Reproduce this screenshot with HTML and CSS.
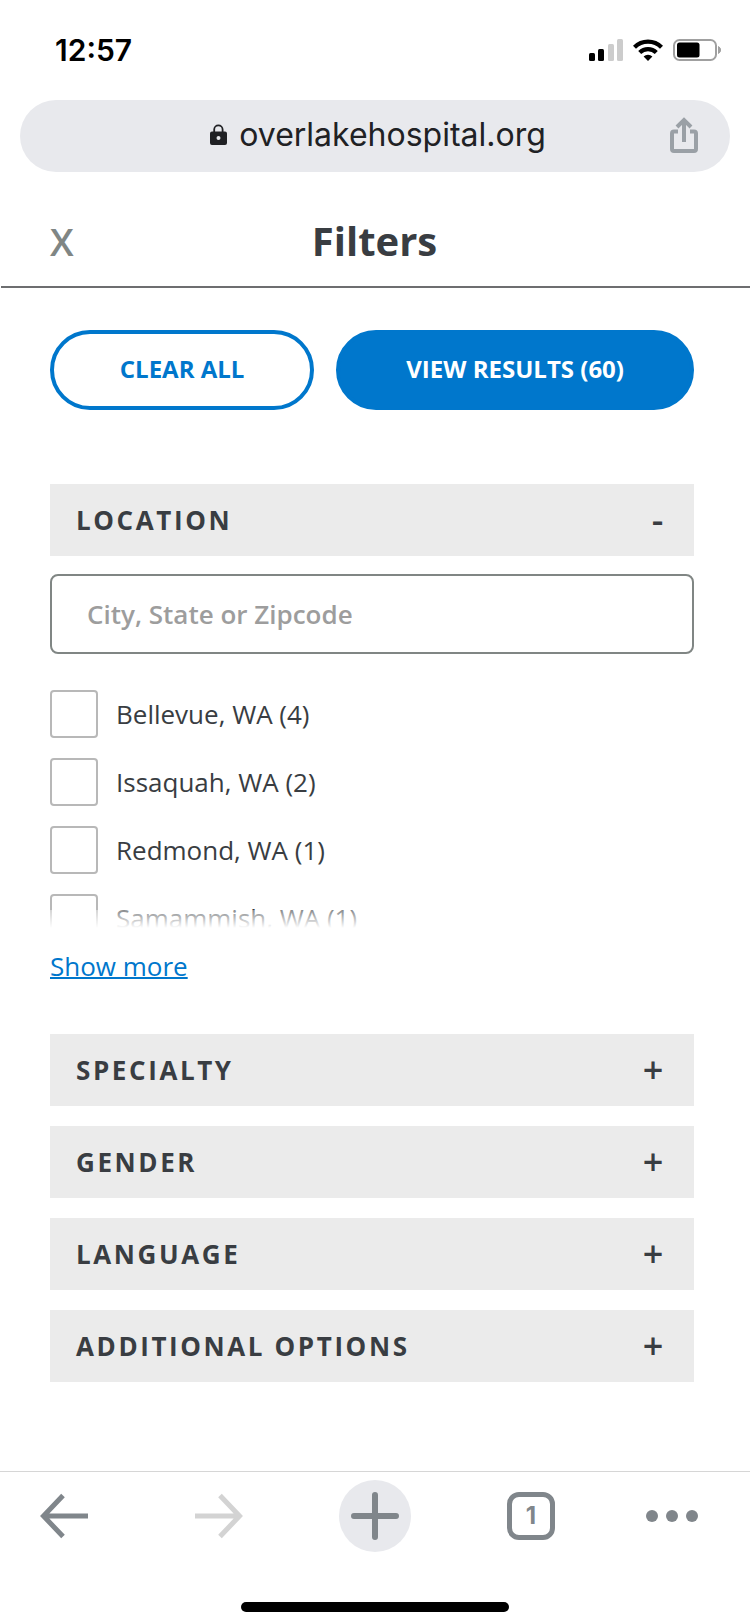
FILE: index.html
```html
<!DOCTYPE html>
<html lang="en">
<head>
<meta charset="utf-8">
<meta name="viewport" content="width=device-width, initial-scale=1">
<title>Filters</title>
<link rel="stylesheet" href="styles.css">
</head>
<body>
<div class="status-bar">
  <span class="status-time">12:57</span>
  <div class="status-icons">
    <svg width="34" height="22" viewBox="0 0 34 22" aria-hidden="true">
      <rect x="0" y="14" width="6" height="8" rx="1.5"/>
      <rect x="9" y="10" width="6" height="12" rx="1.5"/>
      <rect x="19" y="5" width="6" height="17" rx="1.5" fill="#cccccc"/>
      <rect x="28" y="0" width="6" height="22" rx="1.5" fill="#cccccc"/>
    </svg>
    <svg width="30" height="22" viewBox="0 0 30 22" aria-hidden="true">
      <g fill="none" stroke="#000" stroke-width="4.2">
        <path d="M1.500 8.200A19 19 0 0 1 28.500 8.200"/>
        <path d="M6.700 13.500A11.700 11.700 0 0 1 23.300 13.500"/>
      </g>
      <path d="M15 22l-4.400-4.500a6.200 6.200 0 0 1 8.800 0z"/>
    </svg>
    <svg width="49" height="22" viewBox="0 0 49 22" aria-hidden="true">
      <rect x="1" y="1" width="42" height="20" rx="5.500" fill="none" stroke="#a0a0a0" stroke-width="2"/>
      <rect x="4" y="3.500" width="22.500" height="15" rx="2.500"/>
      <path d="M45.500 7.500a4 4 0 0 1 0 7z" fill="#a0a0a0" stroke="#a0a0a0"/>
    </svg>
  </div>
</div>

<div class="address-bar">
  <div class="address">
    <svg width="17" height="22" viewBox="0 0 17 22" aria-hidden="true">
      <path d="M4.200 8V5.500a4.200 4.200 0 0 1 8.400 0V8" fill="none" stroke="#202124" stroke-width="1.800"/>
      <path fill="#202124" fill-rule="evenodd" d="M2 7.500h13a2 2 0 0 1 2 2V19a2 2 0 0 1-2 2H2a2 2 0 0 1-2-2V9.500a2 2 0 0 1 2-2zM8.500 12a2 2 0 1 0 0 4 2 2 0 0 0 0-4z"/>
    </svg>
    <span>overlakehospital.org</span>
  </div>
  <button class="share" type="button" aria-label="Share">
    <svg width="28" height="36" viewBox="0 0 28 36" fill="none" stroke="#9aa0a6" stroke-width="4" aria-hidden="true">
      <path d="M8 14.500H4a2 2 0 0 0-2 2V32a2 2 0 0 0 2 2h20a2 2 0 0 0 2-2V16.500a2 2 0 0 0-2-2h-4" stroke-linejoin="round"/>
      <path d="M14 25V3M7 10l7-7 7 7"/>
    </svg>
  </button>
</div>

<header class="page-header">
  <button class="close" type="button" aria-label="Close filters">X</button>
  <h1 class="title">Filters</h1>
</header>

<main class="content">
  <div class="actions">
    <button class="pill pill-outline" type="button">CLEAR ALL</button>
    <button class="pill pill-solid" type="button">VIEW RESULTS (60)</button>
  </div>

  <section class="location">
    <h2 class="facet"><button class="facet-toggle" type="button" aria-expanded="true"><span>LOCATION</span><span class="facet-sign">-</span></button></h2>
    <input class="place-input" type="text" placeholder="City, State or Zipcode" aria-label="City, State or Zipcode">
    <div class="options">
      <label class="option"><input class="box" type="checkbox"><span>Bellevue, WA (4)</span></label>
      <label class="option"><input class="box" type="checkbox"><span>Issaquah, WA (2)</span></label>
      <label class="option"><input class="box" type="checkbox"><span>Redmond, WA (1)</span></label>
      <label class="option"><input class="box" type="checkbox"><span>Samammish, WA (1)</span></label>
    </div>
    <a class="show-more" href="#">Show more</a>
  </section>

  <div class="facets">
    <h2 class="facet"><button class="facet-toggle" type="button" aria-expanded="false"><span>SPECIALTY</span><span class="facet-sign">+</span></button></h2>
    <h2 class="facet"><button class="facet-toggle" type="button" aria-expanded="false"><span>GENDER</span><span class="facet-sign">+</span></button></h2>
    <h2 class="facet"><button class="facet-toggle" type="button" aria-expanded="false"><span>LANGUAGE</span><span class="facet-sign">+</span></button></h2>
    <h2 class="facet"><button class="facet-toggle" type="button" aria-expanded="false"><span>ADDITIONAL OPTIONS</span><span class="facet-sign">+</span></button></h2>
  </div>
</main>

<footer class="browser-bar">
  <nav class="tools" aria-label="Browser">
    <button class="tool" type="button" aria-label="Back">
      <svg width="48" height="48" viewBox="0 0 48 48" fill="none" stroke="#80868b" stroke-width="5" aria-hidden="true"><path d="M48 24H5M23 3.500L3.500 24 23 44.500"/></svg>
    </button>
    <button class="tool" type="button" aria-label="Forward">
      <svg width="48" height="48" viewBox="0 0 48 48" fill="none" stroke="#d3d3d3" stroke-width="5" aria-hidden="true"><path d="M0 24h43M25 3.500L44.500 24 25 44.500"/></svg>
    </button>
    <button class="tool tool-new" type="button" aria-label="New tab">
      <svg width="48" height="48" viewBox="0 0 48 48" fill="none" stroke="#80868b" stroke-width="6" stroke-linecap="round" aria-hidden="true"><path d="M24 3v42M3 24h42"/></svg>
    </button>
    <button class="tool tool-tabs" type="button" aria-label="Tabs, 1 open"><span class="tab-count">1</span></button>
    <button class="tool tool-menu" type="button" aria-label="Menu">
      <svg width="52" height="12" viewBox="0 0 52 12" fill="#80868b" aria-hidden="true"><circle cx="6" cy="6" r="6"/><circle cx="26" cy="6" r="6"/><circle cx="46" cy="6" r="6"/></svg>
    </button>
  </nav>
  <div class="home-indicator"></div>
</footer>
</body>
</html>
```
FILE: styles.css
```css
* {
  box-sizing: border-box;
}

body {
  margin: 0;
  min-height: 100vh;
  display: flex;
  flex-direction: column;
  background: #fff;
  color: #393d42;
  font-family: "Open Sans", "Noto Sans", sans-serif;
}

button {
  margin: 0;
  padding: 0;
  border: 0;
  background: none;
  color: inherit;
  font: inherit;
  cursor: pointer;
}

svg {
  display: block;
}

.status-bar {
  display: flex;
  justify-content: space-between;
  align-items: center;
  height: 100px;
  padding: 0 28px 0 55px;
  color: #000;
}

.status-time {
  font: 600 30px/36px Inter, sans-serif;
}

.status-icons {
  display: flex;
  gap: 10px;
}

.address-bar {
  display: grid;
  grid-template-columns: 1fr auto 1fr;
  align-items: center;
  height: 72px;
  margin: 0 20px;
  padding: 0 32px 2px 38px;
  border-radius: 36px;
  background: #e8e9ed;
}

.address {
  grid-column: 2;
  display: flex;
  align-items: center;
  gap: 12px;
  color: #202124;
  font: 400 32px/40px Inter, sans-serif;
}

.share {
  justify-self: end;
}

.page-header {
  display: grid;
  grid-template-columns: 1fr auto 1fr;
  align-items: center;
  height: 116px;
  margin-left: 1px;
  padding: 32px 51px 8px 49px;
  border-bottom: 2px solid #6d6e70;
}

.close {
  justify-self: start;
  color: #808684;
  font-size: 38px;
  font-weight: 600;
  line-height: 54px;
}

.title {
  margin: 0;
  font-size: 40px;
  font-weight: 700;
  line-height: 54px;
}

.content {
  padding: 42px 56px 40px 50px;
}

.actions {
  display: flex;
  gap: 22px;
}

.pill {
  height: 80px;
  padding-bottom: 3px;
  border: 4px solid #0077cc;
  border-radius: 40px;
  font-size: 24px;
  font-weight: 700;
}

.pill-outline {
  flex: 263 1 0;
  color: #0077cc;
}

.pill-solid {
  flex: 359 1 0;
  background: #0077cc;
  color: #fff;
}

.location {
  display: flex;
  flex-direction: column;
  align-items: flex-start;
  margin-top: 74px;
}

.facet {
  width: 100%;
  margin: 0;
  font-size: 26px;
  font-weight: 700;
  line-height: 36px;
}

.facet-toggle {
  display: flex;
  justify-content: space-between;
  align-items: center;
  width: 100%;
  height: 72px;
  padding: 0 28px 0 26px;
  background: #ebebeb;
  letter-spacing: 0.1em;
}

.facet-sign {
  font-size: 36px;
  font-weight: 600;
}

.place-input {
  width: 100%;
  height: 80px;
  margin-top: 18px;
  padding: 0 35px;
  border: 2px solid #808684;
  border-radius: 8px;
  color: #393d42;
  font: 600 26px/36px "Open Sans", "Noto Sans", sans-serif;
}

.place-input::placeholder {
  color: #9d9d9d;
  opacity: 1;
}

.options {
  position: relative;
  display: flex;
  flex-direction: column;
  gap: 20px;
  width: 100%;
  height: 238px;
  margin-top: 36px;
  overflow: hidden;
}

.options::after {
  content: "";
  position: absolute;
  inset: auto 0 0;
  height: 18px;
  background: linear-gradient(rgba(255, 255, 255, 0.4), #fff);
}

.option {
  display: flex;
  flex: none;
  align-items: center;
  gap: 18px;
  font-size: 26px;
  line-height: 36px;
}

.box {
  appearance: none;
  width: 48px;
  height: 48px;
  margin: 0;
  border: 2px solid #b8b8b8;
  border-radius: 4px;
  background: #fff;
}

.box:checked {
  background: #0077cc;
}

.show-more {
  margin-top: 20px;
  color: #0077cc;
  font-size: 26px;
  line-height: 36px;
  text-decoration-thickness: 2px;
}

.facets {
  display: flex;
  flex-direction: column;
  gap: 20px;
  margin-top: 50px;
}

.browser-bar {
  margin-top: auto;
  border-top: 1px solid #d6d6d6;
}

.tools {
  display: grid;
  grid-template-columns: 128fr 182fr 130fr 182fr 128fr;
  align-items: center;
  justify-items: center;
  padding-top: 8px;
}

.tool {
  display: flex;
  align-items: center;
  justify-content: center;
  width: 72px;
  height: 72px;
}

.tool-new {
  border-radius: 50%;
  background: #e8e9ed;
}

.tab-count {
  width: 48px;
  height: 48px;
  border: 5px solid #80868b;
  border-radius: 12px;
  color: #80868b;
  font: 700 24px/38px Inter, sans-serif;
}

.tool-menu {
  justify-self: start;
  width: 100px;
}

.home-indicator {
  width: 36%;
  max-width: 268px;
  height: 10px;
  margin: 50px auto 12px;
  border-radius: 5px;
  background: #000;
}
```
